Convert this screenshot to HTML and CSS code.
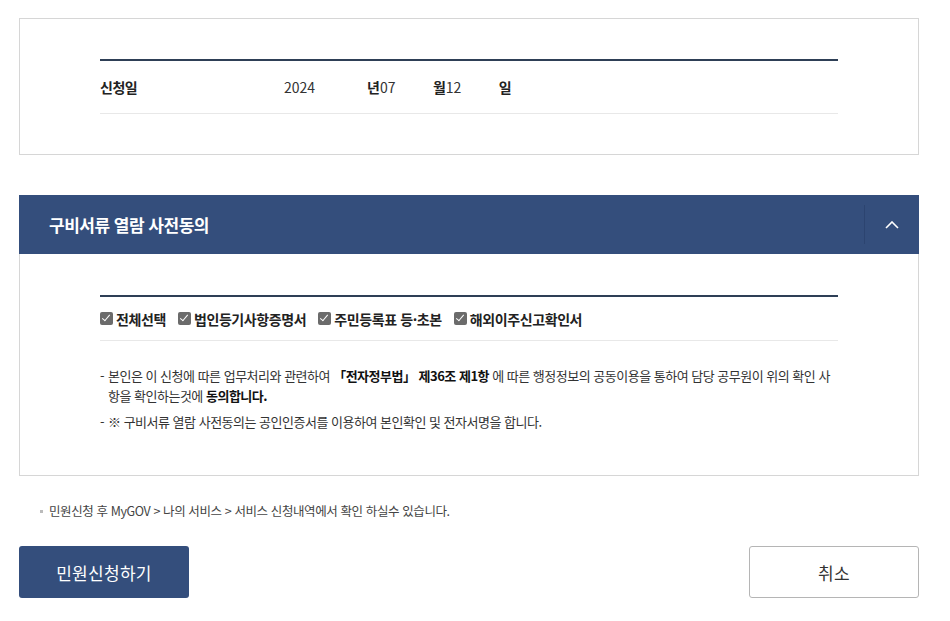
FILE: index.html
```html
<!DOCTYPE html>
<html lang="ko">
<head>
    <meta charset="UTF-8">
    <title>민원신청</title>
    <link rel="stylesheet" href="styles.css">
</head>
<body>
<div class="wrap">
    <div class="box date-box">
        <div class="tbl">
            <div class="tbl-row">
                <span class="th">신청일</span>
                <span class="val w-year">2024</span>
                <span class="unit">년</span>
                <span class="val w-md">07</span>
                <span class="unit">월</span>
                <span class="val w-md">12</span>
                <span class="unit">일</span>
            </div>
        </div>
    </div>

    <div class="acc">
        <div class="acc-head">
            <h2>구비서류 열람 사전동의</h2>
            <button class="acc-toggle" type="button" aria-label="접기">
                <svg width="14" height="8" viewBox="0 0 14 8"><polyline points="1,7 7,1 13,7" fill="none" stroke="#fff" stroke-width="1.6"/></svg>
            </button>
        </div>
        <div class="acc-body">
            <div class="tbl">
                <div class="chk-row">
                    <label class="chk"><span class="box-ico"></span>전체선택</label>
                    <label class="chk"><span class="box-ico"></span>법인등기사항증명서</label>
                    <label class="chk"><span class="box-ico"></span>주민등록표 등·초본</label>
                    <label class="chk"><span class="box-ico"></span>해외이주신고확인서</label>
                </div>
            </div>
            <ul class="agree">
                <li>본인은 이 신청에 따른 업무처리와 관련하여 <b>「전자정부법」 제36조 제1항</b> 에 따른 행정정보의 공동이용을 통하여 담당 공무원이 위의 확인 사항을 확인하는것에 <b>동의합니다.</b></li>
                <li>※ 구비서류 열람 사전동의는 공인인증서를 이용하여 본인확인 및 전자서명을 합니다.</li>
            </ul>
        </div>
    </div>

    <p class="note">민원신청 후 MyGOV <span class="gt">&gt;</span> 나의 서비스 <span class="gt">&gt;</span> 서비스 신청내역에서 확인 하실수 있습니다.</p>

    <div class="btns">
        <button class="btn btn-primary" type="button">민원신청하기</button>
        <button class="btn btn-line" type="button">취소</button>
    </div>
</div>
</body>
</html>
```

FILE: styles.css
```css
body {
    margin: 0;
    font-family: "Noto Sans CJK KR", "Noto Sans", sans-serif;
    color: #222;
    background: #fff;
}
.wrap {
    width: 900px;
    margin-left: 19px;
    padding-top: 18px;
}
.box {
    border: 1px solid #d6d6d6;
}
.date-box {
    padding: 40px 80px;
}
.tbl {
    border-top: 2px solid #2e3f56;
}
.tbl-row {
    display: flex;
    align-items: center;
    height: 52px;
    border-bottom: 1px solid #e8e8e8;
    font-size: 14px;
}
.th {
    width: 184px;
    font-weight: bold;
    letter-spacing: -0.5px;
}
.val {
    color: #333;
}
.w-year {
    width: 83px;
}
.w-md {
    width: 53px;
}
.unit {
    font-weight: bold;
}

/* 아코디언 */
.acc {
    margin-top: 40px;
}
.acc-head {
    display: flex;
    align-items: center;
    height: 59px;
    background: #344e7c;
}
.acc-head h2 {
    flex: 1;
    margin: 0;
    padding-left: 30px;
    color: #fff;
    font-size: 17px;
    letter-spacing: -0.5px;
}
.acc-toggle {
    width: 55px;
    height: 39px;
    border: 0;
    border-left: 1px solid #2c4470;
    background: transparent;
    display: flex;
    align-items: center;
    justify-content: center;
    padding: 0;
}
.acc-body {
    border: 1px solid #d6d6d6;
    border-top: 0;
    padding: 41px 80px 37px;
}
.chk-row {
    display: flex;
    align-items: center;
    height: 43px;
    border-bottom: 1px solid #e8e8e8;
}
.chk {
    display: flex;
    align-items: center;
    margin-right: 12px;
    font-size: 14px;
    font-weight: bold;
    letter-spacing: -0.4px;
}
.box-ico {
    position: relative;
    width: 13px;
    height: 13px;
    margin-right: 3px;
    background: #6b6b6b;
    border-radius: 2px;
}
.box-ico::after {
    content: "";
    position: absolute;
    left: 4px;
    top: 1px;
    width: 3px;
    height: 7px;
    border: solid #fff;
    border-width: 0 1.5px 1.5px 0;
    transform: rotate(40deg);
}
.agree {
    list-style: none;
    margin: 25px 0 0;
    padding: 0;
    font-size: 13px;
    line-height: 20px;
    letter-spacing: -0.5px;
    color: #333;
}
.agree li {
    position: relative;
    padding-left: 8px;
    margin-bottom: 6px;
}
.agree li::before {
    content: "-";
    position: absolute;
    left: 0;
    top: 0;
}
.agree b {
    color: #111;
}
.note {
    position: relative;
    margin: 27px 0 0;
    padding-left: 30px;
    font-size: 12.5px;
    line-height: 16px;
    letter-spacing: -0.4px;
    color: #444;
}
.note::before {
    content: "";
    position: absolute;
    left: 21px;
    top: 7px;
    width: 3px;
    height: 3px;
    background: #bbb;
}
.btns {
    display: flex;
    justify-content: space-between;
    margin-top: 27px;
}
.btn {
    width: 170px;
    height: 52px;
    border-radius: 3px;
    font-family: inherit;
    font-size: 17px;
    letter-spacing: 0.3px;
    cursor: pointer;
}
.btn-primary {
    background: #344e7c;
    border: 0;
    color: #fff;
}
.btn-line {
    background: #fff;
    border: 1px solid #b5b5b5;
    color: #333;
}
```
